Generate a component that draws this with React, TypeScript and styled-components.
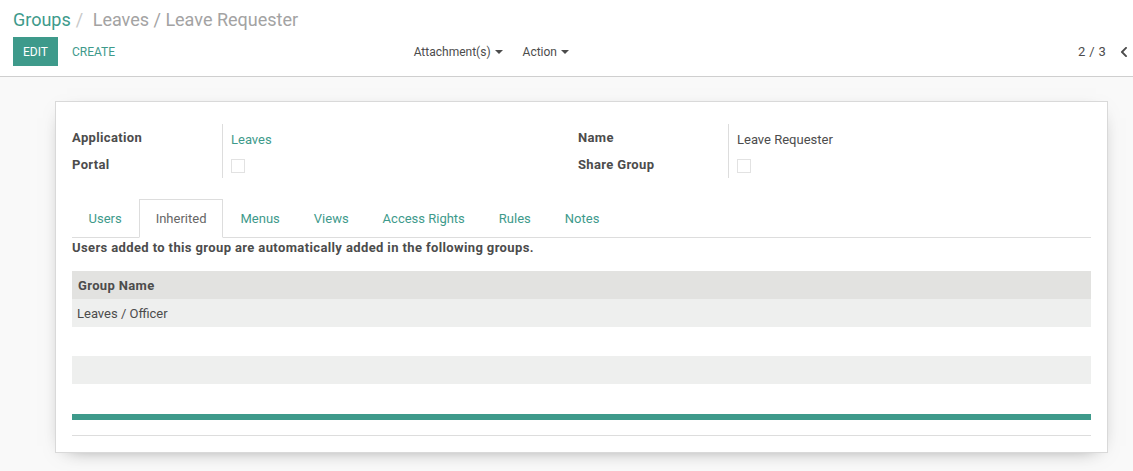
import React from 'react';
import styled, { createGlobalStyle } from 'styled-components';
import { FaChevronLeft } from 'react-icons/fa';

const teal = '#3e9a8b';
const text = '#4c4c4c';

const GlobalStyle = createGlobalStyle`
  html, body {
    margin: 0;
    padding: 0;
    height: 100%;
    background: #f9f9f9;
  }
  body {
    font-family: Roboto, 'Noto Sans', sans-serif;
    font-size: 13px;
    color: ${text};
  }
  #root {
    min-height: 100%;
  }
  * {
    box-sizing: border-box;
  }
`;

const ControlPanel = styled.header`
  background: #fff;
  border-bottom: 1px solid #cfcfcf;
  padding: 5px 3px 10px 13px;
`;

const Breadcrumb = styled.ol`
  display: flex;
  margin: 0;
  padding: 0;
  list-style: none;
  height: 30px;
  line-height: 30px;
  font-size: 18px;
`;

const Crumb = styled.li<{ $active?: boolean }>`
  color: ${(p) => (p.$active ? '#a3a3a3' : teal)};
`;

const CrumbSep = styled.li`
  padding: 0 5px;
  color: #c8c8c8;
  white-space: pre;
`;

const ControlRow = styled.div`
  display: grid;
  grid-template-columns: 556px 1fr;
  margin-top: 2px;
  height: 29px;
`;

const LeftSide = styled.div`
  display: flex;
  align-items: center;
`;

const Button = styled.button<{ $primary?: boolean }>`
  height: 29px;
  padding: 0 10px;
  border: none;
  font-family: inherit;
  font-size: 12px;
  text-transform: uppercase;
  cursor: pointer;
  background: ${(p) => (p.$primary ? teal : 'transparent')};
  color: ${(p) => (p.$primary ? '#fff' : teal)};
  margin-right: 4px;
`;

const Sidebar = styled.div`
  display: flex;
  align-items: center;
  margin-left: auto;
`;

const Dropdown = styled.span`
  display: flex;
  align-items: center;
  padding: 0 10px;
  font-size: 12px;
  color: ${text};
  cursor: pointer;
  &:last-child {
    padding-right: 0;
  }
`;

const Caret = styled.span`
  display: inline-block;
  margin-left: 4px;
  width: 0;
  height: 0;
  border-left: 4px solid transparent;
  border-right: 4px solid transparent;
  border-top: 4px solid ${text};
`;

const Pager = styled.div`
  display: flex;
  align-items: center;
  justify-content: flex-end;
  gap: 12px;
`;

const PagerValue = styled.span`
  letter-spacing: 0.3px;
`;

const PagerButton = styled.span`
  display: flex;
  align-items: center;
  color: ${text};
`;

const Content = styled.main`
  padding: 24px 25px 0 55px;
`;

const Sheet = styled.section`
  background: #fff;
  border: 1px solid #d9d9d9;
  box-shadow: 0 5px 20px -12px rgba(0, 0, 0, 0.6);
  padding: 22px 16px 16px;
`;

const Groups = styled.div`
  display: grid;
  grid-template-columns: 506px 1fr;
`;

const FieldGroup = styled.div`
  display: grid;
  grid-template-columns: 151px 1fr;
  grid-auto-rows: 27px;
`;

const Label = styled.div`
  display: flex;
  align-items: center;
  font-weight: bold;
  letter-spacing: 0.35px;
  border-right: 1px solid #ddd;
`;

const Value = styled.div<{ $link?: boolean }>`
  display: flex;
  align-items: center;
  padding: 3px 0 0 8px;
  color: ${(p) => (p.$link ? teal : text)};
`;

const Checkbox = styled.span`
  display: inline-block;
  width: 14px;
  height: 14px;
  border: 1px solid #e2e2e2;
  background: #fff;
`;

const Tabs = styled.ul`
  display: flex;
  margin: 21px 0 0;
  padding: 0;
  list-style: none;
  border-bottom: 1px solid #ddd;
`;

const Tab = styled.li<{ $active?: boolean }>`
  margin: 0 1px -1px 0;
  padding: 9px 15.5px;
  line-height: 19px;
  border: 1px solid ${(p) => (p.$active ? '#ddd' : 'transparent')};
  border-bottom-color: ${(p) => (p.$active ? '#fff' : 'transparent')};
  background: ${(p) => (p.$active ? '#fff' : 'transparent')};
  color: ${(p) => (p.$active ? '#666' : teal)};
  cursor: pointer;
`;

const Help = styled.p`
  margin: 0;
  padding-top: 1px;
  font-weight: bold;
  letter-spacing: 0.38px;
  line-height: 18px;
`;

const Table = styled.table`
  width: 100%;
  margin-top: 14px;
  border-collapse: collapse;
`;

const Th = styled.th`
  height: 28px;
  padding: 0 6px;
  text-align: left;
  font-weight: bold;
  letter-spacing: 0.35px;
  background: #e2e2e0;
`;

const Row = styled.tr<{ $odd?: boolean }>`
  height: ${(p) => (p.$odd ? '28px' : '29px')};
  background: ${(p) => (p.$odd ? '#eeefee' : '#fff')};
`;

const Td = styled.td`
  padding: 0 5px;
`;

const Progress = styled.div`
  height: 6px;
  margin-top: 1px;
  background: ${teal};
`;

const Footer = styled.div`
  margin-top: 15px;
  border-top: 1px solid #ddd;
`;

const tabs = ['Users', 'Inherited', 'Menus', 'Views', 'Access Rights', 'Rules', 'Notes'];

const rows = ['Leaves / Officer', '', '', ''];

export default function App() {
  return (
    <>
      <GlobalStyle />
      <ControlPanel>
        <Breadcrumb>
          <Crumb>Groups</Crumb>
          <CrumbSep>{'/ '}</CrumbSep>
          <Crumb $active>Leaves / Leave Requester</Crumb>
        </Breadcrumb>
        <ControlRow>
          <LeftSide>
            <Button $primary>Edit</Button>
            <Button>Create</Button>
            <Sidebar>
              <Dropdown>
                Attachment(s)
                <Caret />
              </Dropdown>
              <Dropdown>
                Action
                <Caret />
              </Dropdown>
            </Sidebar>
          </LeftSide>
          <Pager>
            <PagerValue>2 / 3</PagerValue>
            <PagerButton>
              <FaChevronLeft size={12} />
            </PagerButton>
          </Pager>
        </ControlRow>
      </ControlPanel>
      <Content>
        <Sheet>
          <Groups>
            <FieldGroup>
              <Label>Application</Label>
              <Value $link>Leaves</Value>
              <Label>Portal</Label>
              <Value>
                <Checkbox />
              </Value>
            </FieldGroup>
            <FieldGroup>
              <Label>Name</Label>
              <Value>Leave Requester</Value>
              <Label>Share Group</Label>
              <Value>
                <Checkbox />
              </Value>
            </FieldGroup>
          </Groups>
          <Tabs>
            {tabs.map((t) => (
              <Tab key={t} $active={t === 'Inherited'}>
                {t}
              </Tab>
            ))}
          </Tabs>
          <Help>Users added to this group are automatically added in the following groups.</Help>
          <Table>
            <thead>
              <tr>
                <Th>Group Name</Th>
              </tr>
            </thead>
            <tbody>
              {rows.map((r, i) => (
                <Row key={i} $odd={i % 2 === 0}>
                  <Td>{r}</Td>
                </Row>
              ))}
            </tbody>
          </Table>
          <Progress />
          <Footer />
        </Sheet>
      </Content>
    </>
  );
}
